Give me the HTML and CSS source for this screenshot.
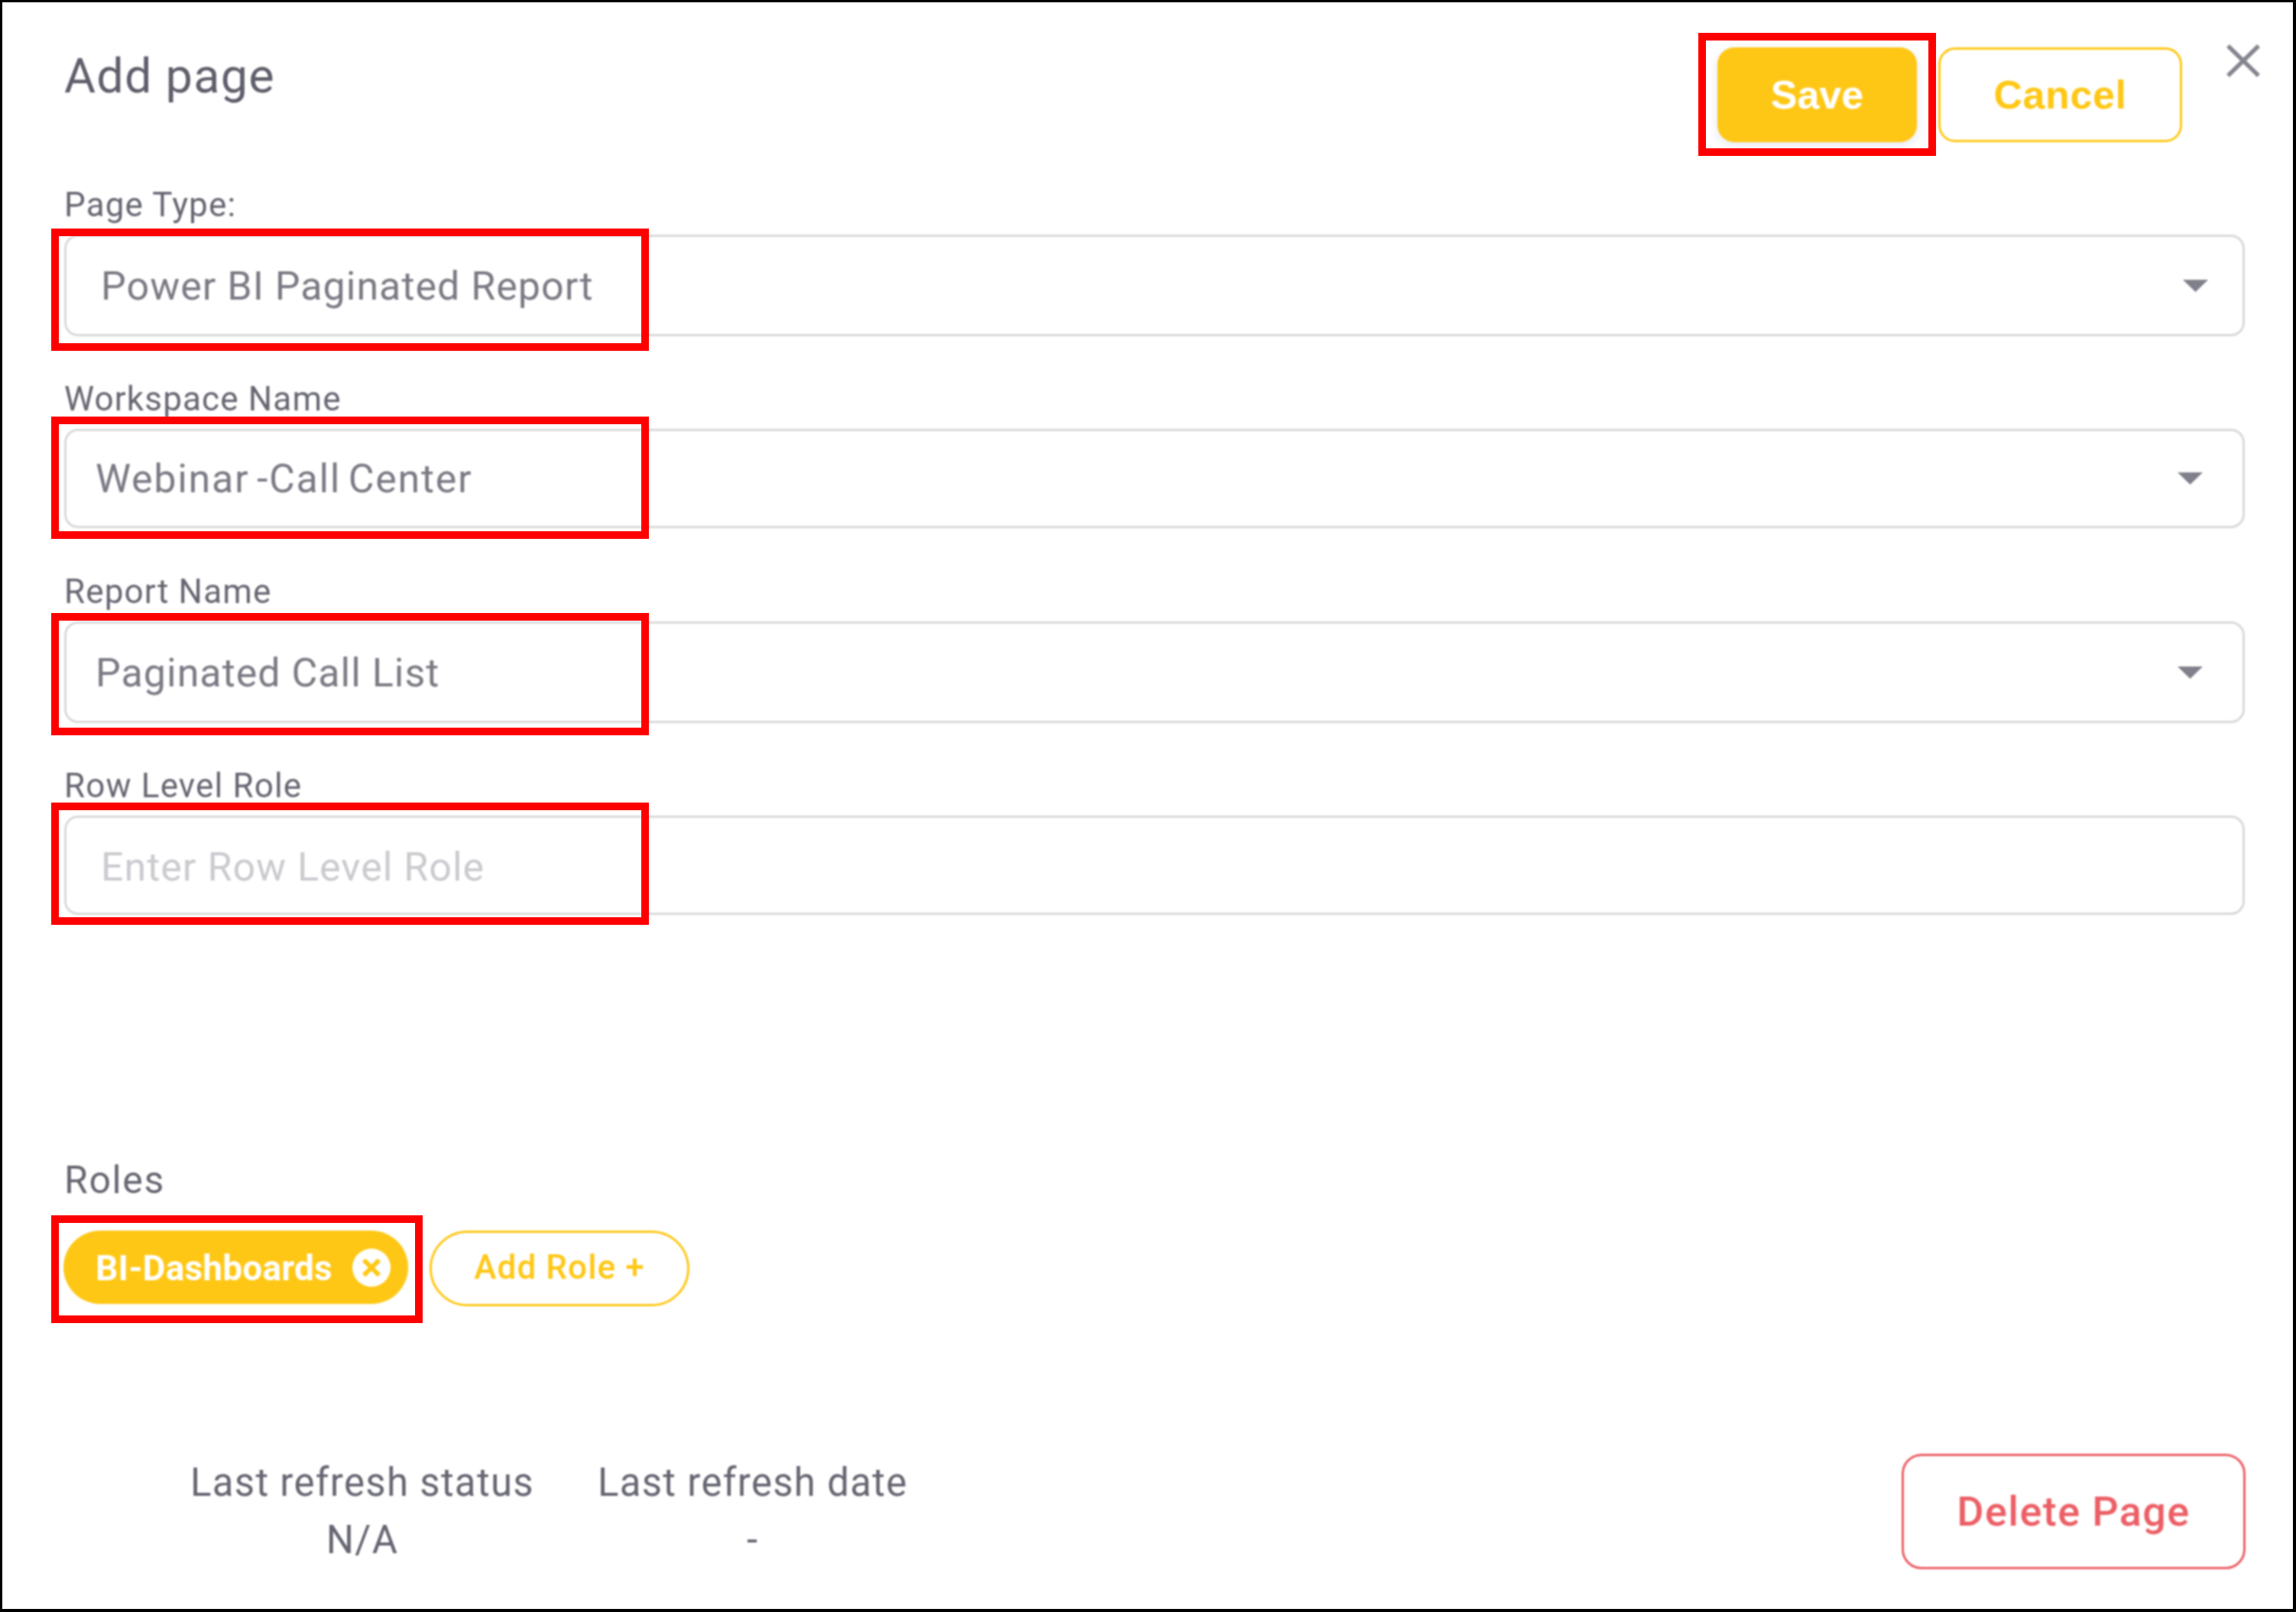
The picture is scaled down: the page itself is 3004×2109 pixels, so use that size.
FILE: index.html
```html
<!DOCTYPE html>
<html lang="en">
<head>
<meta charset="utf-8">
<title>Add page</title>
<link rel="stylesheet" href="styles.css">
</head>
<body>
<main class="frame">
  <div class="dialog">
    <header class="head">
      <h1 class="title">Add page</h1>
      <button class="btn btn-save">Save</button>
      <button class="btn btn-cancel">Cancel</button>
      <svg class="close" viewBox="0 0 44 43" aria-hidden="true"><path d="M2 2 42 41M42 2 2 41"/></svg>
    </header>
    <section class="fields">
      <div class="field">
        <div class="label">Page Type:</div>
        <div class="control tall inset-wide pad-caret-a"><span>Power BI Paginated Report</span><svg class="caret" viewBox="0 0 35 18" aria-hidden="true"><path d="M1 1h33L17.500 17z"/></svg></div>
      </div>
      <div class="field">
        <div class="label">Workspace Name</div>
        <div class="control short inset-narrow pad-caret-b loose"><span>Webinar -Call Center</span><svg class="caret" viewBox="0 0 35 18" aria-hidden="true"><path d="M1 1h33L17.500 17z"/></svg></div>
      </div>
      <div class="field field-shift">
        <div class="label">Report Name</div>
        <div class="control tall inset-narrow pad-caret-b"><span>Paginated Call List</span><svg class="caret" viewBox="0 0 35 18" aria-hidden="true"><path d="M1 1h33L17.500 17z"/></svg></div>
      </div>
      <div class="field">
        <div class="label">Row Level Role</div>
        <div class="control short inset-wide placeholder"><span>Enter Row Level Role</span></div>
      </div>
    </section>
    <section class="roles">
      <div class="roles-label">Roles</div>
      <div class="roles-row">
        <div class="chip"><span>BI-Dashboards</span><svg class="chip-x" viewBox="0 0 50 50" aria-hidden="true"><circle cx="25" cy="25" r="25"/><path d="M15 15 35 35M35 15 15 35"/></svg></div>
        <button class="add-role">Add Role +</button>
      </div>
    </section>
    <footer class="foot">
      <div class="stats">
        <div class="stat stat-status"><div>Last refresh status</div><div>N/A</div></div>
        <div class="stat stat-date"><div>Last refresh date</div><div>-</div></div>
      </div>
      <button class="btn-delete">Delete Page</button>
    </footer>
  </div>
  <div class="mark mark-save"></div>
  <div class="mark mark-type"></div>
  <div class="mark mark-workspace"></div>
  <div class="mark mark-report"></div>
  <div class="mark mark-row"></div>
  <div class="mark mark-chip"></div>
</main>
</body>
</html>
```
FILE: styles.css
```css
* { box-sizing: border-box; }
html, body { margin: 0; padding: 0; background: #fff; }
body { width: 3004px; height: 2109px; overflow: hidden; font-family: Roboto, "Liberation Sans", sans-serif; }

.frame {
  position: relative;
  width: 3004px;
  height: 2109px;
  background: #fff;
  border-style: solid;
  border-color: #000;
  border-width: 3px 4px 4px 3px;
}
.dialog {
  padding: 59px 63px 0 81px;
  filter: blur(0.8px);
}

.head { display: flex; align-items: flex-start; height: 124px; }
.title {
  margin: 0 auto 0 0;
  font-size: 63px;
  font-weight: 400;
  line-height: 75px;
  letter-spacing: 1.2px;
  color: #5f5f6c;
}
.btn {
  height: 124px;
  font-family: "Liberation Sans", Arial, sans-serif;
  font-size: 52px;
  font-weight: 700;
  border-radius: 22px;
  padding: 0;
}
.btn-save {
  width: 261px;
  color: #fff;
  background: #ffc715;
  border: 0;
  box-shadow: 0 4px 14px rgba(120, 130, 170, .18);
}
.btn-cancel {
  width: 319px;
  margin-left: 28px;
  color: #ffc715;
  background: #fff;
  border: 3px solid #ffc715;
  letter-spacing: .6px;
}
.close {
  width: 44px;
  height: 43px;
  margin: -4px -20px 0 58px;
  fill: none;
  stroke: #85858f;
  stroke-width: 5.500;
}

.fields { display: flex; flex-direction: column; gap: 55px; margin-top: 55px; }
.field-shift { margin-top: 1px; }
.label {
  height: 50px;
  margin-bottom: 16px;
  font-size: 44px;
  line-height: 54px;
  letter-spacing: 1.15px;
  color: #666672;
}
.control {
  display: flex;
  align-items: center;
  justify-content: space-between;
  border: 3px solid #d9d9dc;
  border-radius: 18px;
  background: #fff;
  font-size: 52px;
  letter-spacing: 1px;
  color: #7a7a84;
}
.control span { padding-top: 2px; }
.loose { letter-spacing: 1.7px; word-spacing: -5px; }
.loose span { padding-top: 0; }
.tall { height: 133px; }
.short { height: 130px; }
.inset-wide { padding-left: 45px; }
.inset-narrow { padding-left: 38px; }
.pad-caret-a { padding-right: 44px; }
.pad-caret-b { padding-right: 51px; }
.placeholder { color: #cacacf; }
.placeholder span { padding-top: 4px; }
.caret { width: 35px; height: 18px; fill: #80808b; }

.roles { margin-top: 320px; }
.roles-label {
  height: 50px;
  margin-bottom: 43px;
  font-size: 50px;
  line-height: 54px;
  letter-spacing: 1.6px;
  color: #666672;
}
.roles-row { display: flex; align-items: flex-start; gap: 28px; height: 99px; margin-left: -1px; }
.chip {
  display: flex;
  align-items: center;
  justify-content: space-between;
  width: 451px;
  height: 96px;
  padding: 0 23px 0 42px;
  border-radius: 48px;
  background: #ffc715;
  color: #fff;
  font-size: 46px;
  font-weight: 700;
}
.chip span { padding-top: 2px; letter-spacing: .2px; }
.chip-x { width: 50px; height: 51px; }
.chip-x circle { fill: #fff; }
.chip-x path { fill: none; stroke: #ffc715; stroke-width: 6; }
.add-role {
  width: 340px;
  height: 99px;
  padding: 0 0 4px;
  border: 3px solid #ffc715;
  border-radius: 50px;
  background: #fff;
  color: #ffc715;
  font-family: Roboto, sans-serif;
  font-size: 44px;
  font-weight: 500;
  letter-spacing: 1.1px;
}

.foot { display: flex; justify-content: space-between; align-items: flex-start; margin-top: 193px; }
.stats { display: flex; gap: 83px; padding-left: 165px; }
.stat {
  text-align: center;
  font-size: 51px;
  line-height: 75px;
  letter-spacing: 1.3px;
  color: #666672;
}
.btn-delete {
  width: 450px;
  height: 151px;
  margin-right: -1px;
  padding: 0;
  border: 3px solid #ec5f66;
  border-radius: 26px;
  background: #fff;
  color: #ec5f66;
  font-family: Roboto, sans-serif;
  font-size: 54px;
  font-weight: 500;
  letter-spacing: 1.4px;
}

.mark { position: absolute; border: 10px solid #f00; }
.mark-save { left: 2219px; top: 40px; width: 311px; height: 161px; }
.mark-type { left: 64px; top: 296px; width: 782px; height: 160px; }
.mark-workspace { left: 64px; top: 542px; width: 782px; height: 160px; }
.mark-report { left: 64px; top: 799px; width: 782px; height: 160px; }
.mark-row { left: 64px; top: 1047px; width: 782px; height: 160px; }
.mark-chip { left: 64px; top: 1587px; width: 486px; height: 141px; }
```
